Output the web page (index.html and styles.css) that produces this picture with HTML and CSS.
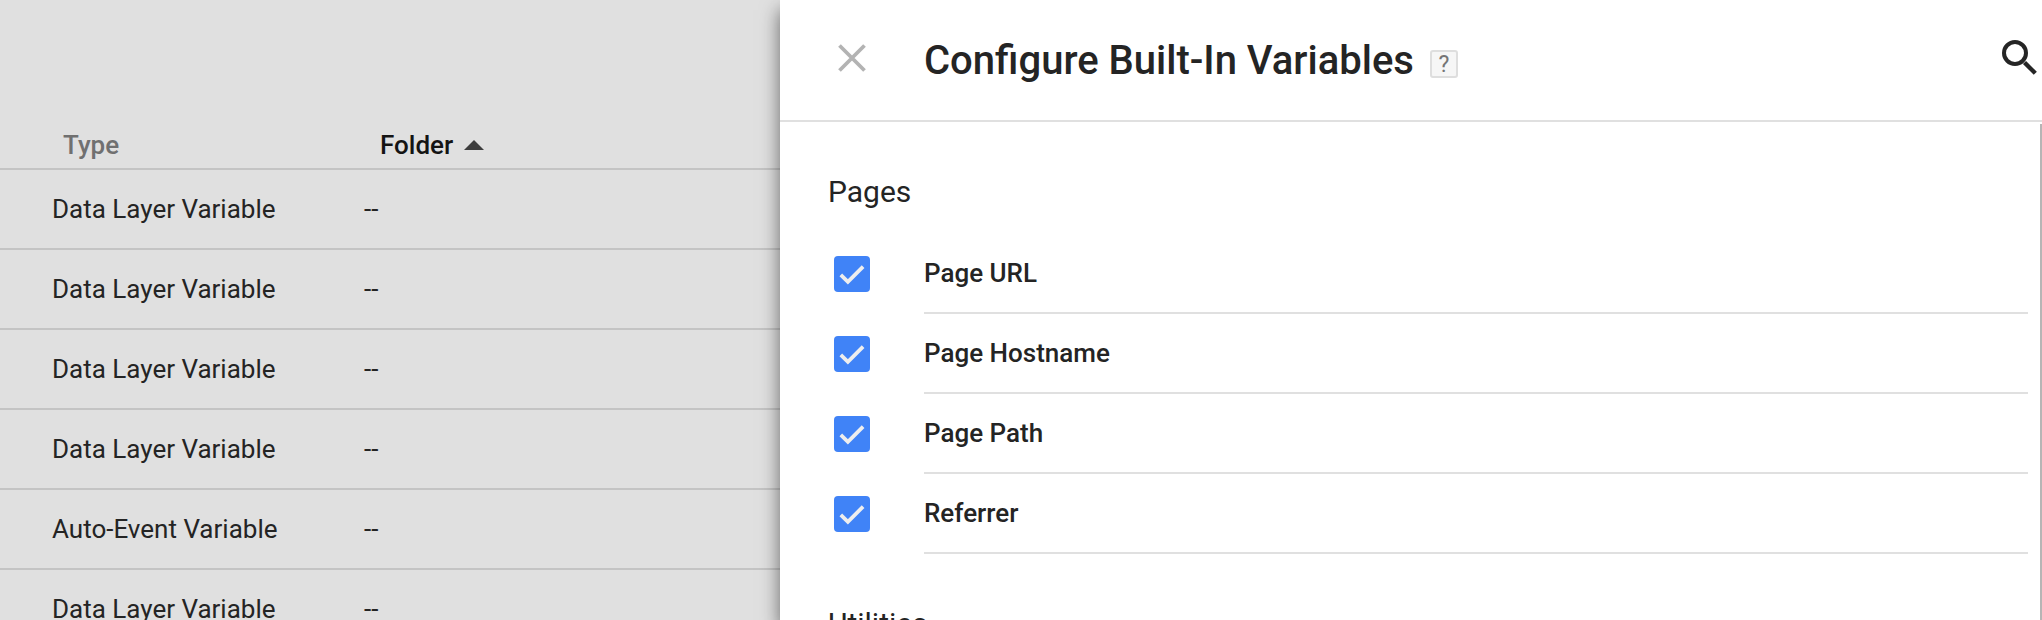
FILE: index.html
```html
<!DOCTYPE html>
<html lang="en">
<head>
<meta charset="utf-8">
<title>Configure Built-In Variables</title>
<link rel="stylesheet" href="styles.css">
</head>
<body>
<div class="app">
  <main class="table">
    <div class="row head">
      <span class="type">Type</span>
      <span class="folder">Folder <svg class="sort" width="20" height="10" viewBox="0 0 20 10"><path d="M0 10 10 0l10 10z" fill="#3e3e3e"/></svg></span>
    </div>
    <div class="row"><span class="type">Data Layer Variable</span><span class="folder">--</span></div>
    <div class="row"><span class="type">Data Layer Variable</span><span class="folder">--</span></div>
    <div class="row"><span class="type">Data Layer Variable</span><span class="folder">--</span></div>
    <div class="row"><span class="type">Data Layer Variable</span><span class="folder">--</span></div>
    <div class="row"><span class="type">Auto-Event Variable</span><span class="folder">--</span></div>
    <div class="row"><span class="type">Data Layer Variable</span><span class="folder">--</span></div>
  </main>
  <aside class="panel">
    <header class="bar">
      <svg class="close" width="28" height="28" viewBox="0 0 28 28"><path d="M1.5 1.5l25 25M26.5 1.5l-25 25" stroke="#b3b3b3" stroke-width="3.8"/></svg>
      <h1 class="title">Configure Built-In Variables</h1>
      <span class="help">?</span>
      <svg class="search" width="36" height="36" viewBox="0 0 36 36" fill="none" stroke="#252525"><circle cx="13" cy="13" r="11" stroke-width="4"/><path d="M22.5 22.5 33.3 33.3" stroke-width="4.4"/></svg>
    </header>
    <div class="content">
      <div class="sections">
        <h2 class="section">Pages</h2>
        <div class="item"><span class="check"><svg width="36" height="36" viewBox="0 0 36 36"><path d="M6.8 18.9l7.1 7L29.1 10.6" fill="none" stroke="#eee" stroke-width="3.8"/></svg></span><span class="label">Page URL</span></div>
        <div class="item"><span class="check"><svg width="36" height="36" viewBox="0 0 36 36"><path d="M6.8 18.9l7.1 7L29.1 10.6" fill="none" stroke="#eee" stroke-width="3.8"/></svg></span><span class="label">Page Hostname</span></div>
        <div class="item"><span class="check"><svg width="36" height="36" viewBox="0 0 36 36"><path d="M6.8 18.9l7.1 7L29.1 10.6" fill="none" stroke="#eee" stroke-width="3.8"/></svg></span><span class="label">Page Path</span></div>
        <div class="item"><span class="check"><svg width="36" height="36" viewBox="0 0 36 36"><path d="M6.8 18.9l7.1 7L29.1 10.6" fill="none" stroke="#eee" stroke-width="3.8"/></svg></span><span class="label">Referrer</span></div>
        <h2 class="section">Utilities</h2>
      </div>
      <div class="scroll"></div>
    </div>
  </aside>
</div>
</body>
</html>
```
FILE: styles.css
```css
* { box-sizing: border-box; }
body {
  margin: 0;
  font-family: Roboto, "Liberation Sans", sans-serif;
  font-size: 26px;
  color: #242424;
}
.app {
  display: flex;
  height: 620px;
  overflow: hidden;
  background: #e0e0e0;
}
.table {
  width: 780px;
  flex: none;
  padding-top: 122px;
}
.row {
  display: flex;
  height: 80px;
  padding-left: 52px;
  border-bottom: 2px solid #c4c4c4;
  line-height: 78px;
}
.type { width: 312px; }
.head {
  height: 48px;
  padding-left: 63px;
  line-height: 46px;
  font-weight: 500;
}
.head .type {
  width: 317px;
  color: #707070;
}
.head .folder {
  display: flex;
  align-items: center;
  gap: 11px;
  color: #141414;
}
.panel {
  flex: 1;
  display: flex;
  flex-direction: column;
  background: #fff;
  box-shadow: 0 10px 18px rgba(0, 0, 0, .55);
}
.bar {
  display: flex;
  align-items: center;
  flex: none;
  height: 122px;
  padding: 0 4px 0 58px;
  border-bottom: 2px solid #e0e0e0;
}
.close { margin: 0 58px 4px 0; }
.title {
  margin: 2px 0 0;
  font-size: 40px;
  font-weight: 500;
  line-height: 118px;
}
.help {
  width: 28px;
  height: 28px;
  margin: 8px 0 0 16px;
  border: 2px solid #dedede;
  border-radius: 3px;
  background: #f6f6f6;
  color: #757575;
  font-size: 23px;
  line-height: 26px;
  text-align: center;
}
.search { margin: 0 0 4px auto; }
.content {
  flex: 1;
  display: flex;
  min-height: 0;
}
.sections {
  flex: 1;
  padding: 0 12px 0 48px;
}
.section {
  margin: 50px 0 22px;
  font-size: 30px;
  font-weight: 400;
  line-height: 40px;
}
.item {
  display: flex;
  height: 80px;
}
.check {
  width: 36px;
  height: 36px;
  margin: 22px 54px 0 6px;
  border-radius: 4px;
  background: #4083f7;
}
.check svg { display: block; }
.label {
  flex: 1;
  border-bottom: 2px solid #e0e0e0;
  font-weight: 500;
  line-height: 78px;
}
.scroll {
  width: 2px;
  margin-top: 2px;
  background: #b5b5b5;
}
```
